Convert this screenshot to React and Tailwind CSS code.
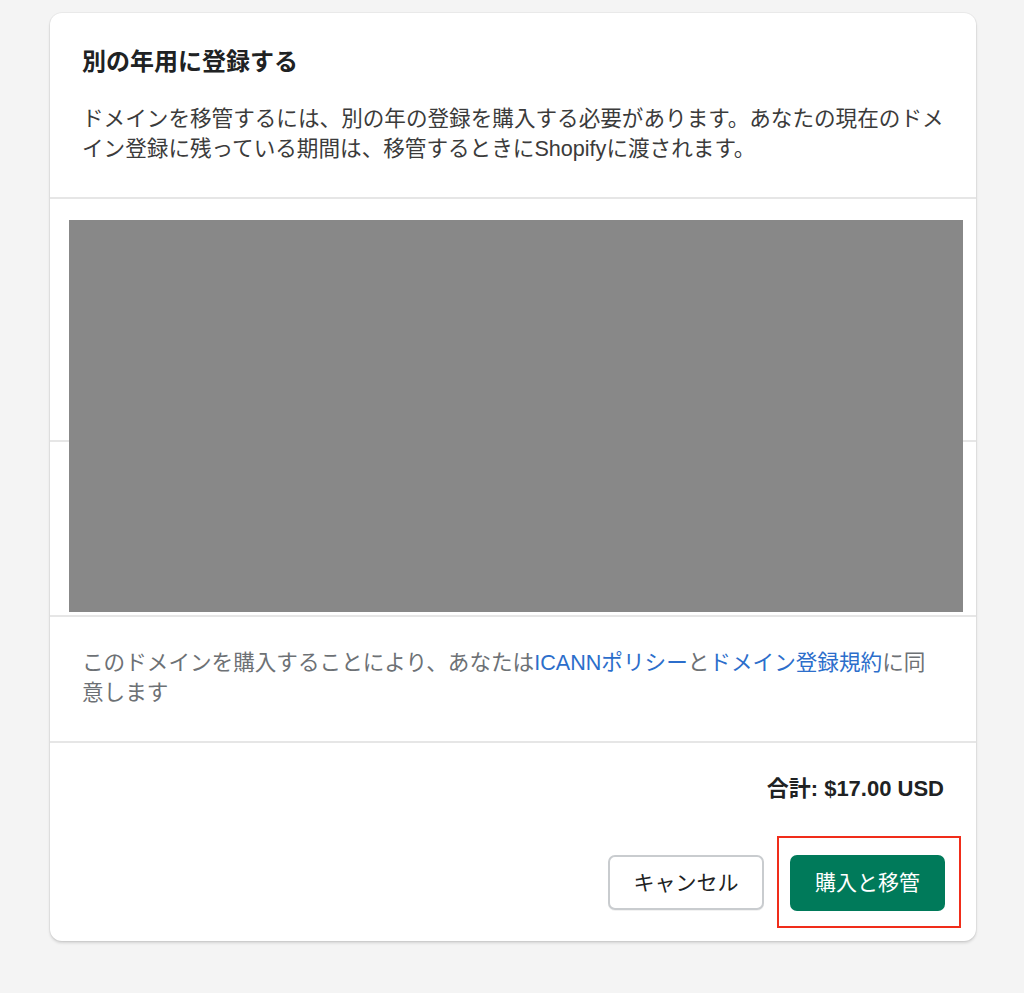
import React from "react";

const font = {
  fontFamily: '"Liberation Sans", "Noto Sans CJK JP", sans-serif',
};

// Section wrapper with the light divider on top
const Section = ({ className = "", children }) => (
  <div className={`border-t-2 border-[#e6e6e6] ${className}`}>{children}</div>
);

export default function App() {
  return (
    <div
      className="min-h-[993px] w-full bg-[#f4f4f4] pt-[13px] pl-[50px]"
      style={font}
    >
      <div className="relative w-[926px] rounded-[12px] bg-white shadow-[0_0_0_1px_rgba(0,0,0,0.04),0_2px_3px_rgba(0,0,0,0.14)]">
        {/* Header */}
        <div className="pl-[32px] pr-[29px] pt-[32px] pb-[33px]">
          <h2 className="text-[24px] leading-[34px] font-bold text-[#202223]">
            別の年用に登録する
          </h2>
          <p className="mt-[25px] text-[21.6px] leading-[30px] text-[#3b3b3b]">
            ドメインを移管するには、別の年の登録を購入する必要があります。あなたの現在のドメイン登録に残っている期間は、移管するときにShopifyに渡されます。
          </p>
        </div>

        {/* Hidden sections */}
        <Section className="h-[243px]" />
        <Section className="h-[175px]" />

        {/* Terms */}
        <Section className="pl-[32px] pr-[36px] pt-[31px] pb-[33px]">
          <p className="text-[21.6px] leading-[30px] text-[#6d7175]">
            このドメインを購入することにより、あなたは
            <a className="text-[#2c6ecb]">ICANNポリシー</a>と
            <a className="text-[#2c6ecb]">ドメイン登録規約</a>に同意します
          </p>
        </Section>

        {/* Footer */}
        <Section className="px-[31px] pt-[31px] pb-[30px]">
          <div className="pr-[1px] text-right text-[22px] leading-[30px] font-bold text-[#202223]">
            合計: $17.00 USD
          </div>
          <div className="mt-[51px] flex justify-end gap-[26px]">
            <button className="h-[55px] w-[156px] rounded-[7px] border-2 border-[#c9cccf] bg-white text-[21px] text-[#202223] shadow-[0_1px_0_rgba(0,0,0,0.05)]">
              キャンセル
            </button>
            <div className="relative">
              <button className="h-[56px] w-[155px] rounded-[7px] bg-[#007a5a] text-[21px] text-white">
                購入と移管
              </button>
              {/* annotation box */}
              <div className="pointer-events-none absolute -top-[19px] -bottom-[17px] -left-[13px] -right-[16px] border-2 border-[#f02d1a]" />
            </div>
          </div>
        </Section>

        {/* Redaction block */}
        <div className="absolute top-[207px] left-[19px] h-[392px] w-[894px] bg-[#888888]" />
      </div>
    </div>
  );
}
